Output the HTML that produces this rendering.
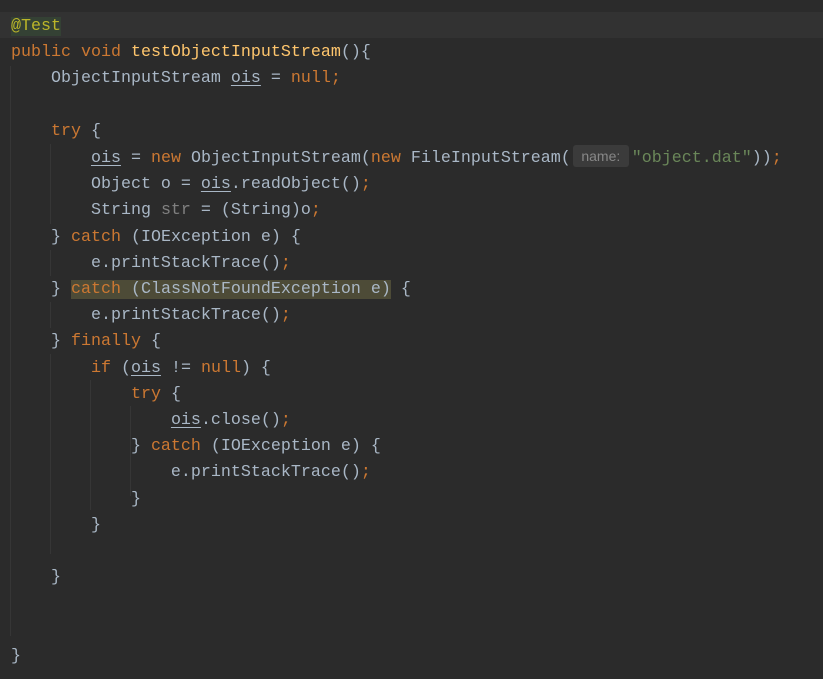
<!DOCTYPE html>
<html><head><style>
html,body{margin:0;padding:0;background:#2b2b2b;width:823px;height:679px;overflow:hidden}
.code{position:absolute;left:11px;top:14px;font-family:"Liberation Mono",monospace;font-size:16.67px;line-height:26.2px;color:#a9b7c6;white-space:pre}
.band{position:absolute;left:0;top:12px;width:823px;height:26px;background:#323232}
.k{color:#cc7832}.m{color:#ffc66d}.s{color:#6a8759}.a{color:#bbb529}.g{color:#808080}
.u{text-decoration:underline;text-underline-offset:3px}
.hl{background:#4d4b37}
.at{background:#344134}
.hint{display:inline-block;width:56px;margin:0 3px 0 2px;height:22px;line-height:22px;background:#3b3b3b;border-radius:3px;color:#878787;font-family:"Liberation Sans",sans-serif;font-size:14px;text-align:center;vertical-align:1px}
.guide{position:absolute;width:1px;background:#363636}
</style></head><body>
<div class="band"></div>
<div class="guide" style="left:10px;top:66px;height:570px"></div>
<div class="guide" style="left:50px;top:144px;height:80px"></div>
<div class="guide" style="left:50px;top:250px;height:26px"></div>
<div class="guide" style="left:50px;top:302px;height:26px"></div>
<div class="guide" style="left:50px;top:354px;height:200px"></div>
<div class="guide" style="left:90px;top:380px;height:130px"></div>
<div class="guide" style="left:130px;top:406px;height:90px"></div>
<div class="code"><span class="a at">@Test</span>
<span class="k">public void </span><span class="m">testObjectInputStream</span>(){
    ObjectInputStream <span class="u">ois</span> = <span class="k">null;</span>

    <span class="k">try </span>{
        <span class="u">ois</span> = <span class="k">new </span>ObjectInputStream(<span class="k">new </span>FileInputStream(<span class="hint">name:</span><span class="s">"object.dat"</span>))<span class="k">;</span>
        Object o = <span class="u">ois</span>.readObject()<span class="k">;</span>
        String <span class="g">str</span> = (String)o<span class="k">;</span>
    } <span class="k">catch </span>(IOException e) {
        e.printStackTrace()<span class="k">;</span>
    } <span class="hl"><span class="k">catch </span>(ClassNotFoundException e)</span> {
        e.printStackTrace()<span class="k">;</span>
    } <span class="k">finally </span>{
        <span class="k">if </span>(<span class="u">ois</span> != <span class="k">null</span>) {
            <span class="k">try </span>{
                <span class="u">ois</span>.close()<span class="k">;</span>
            } <span class="k">catch </span>(IOException e) {
                e.printStackTrace()<span class="k">;</span>
            }
        }

    }


}</div>
</body></html>
